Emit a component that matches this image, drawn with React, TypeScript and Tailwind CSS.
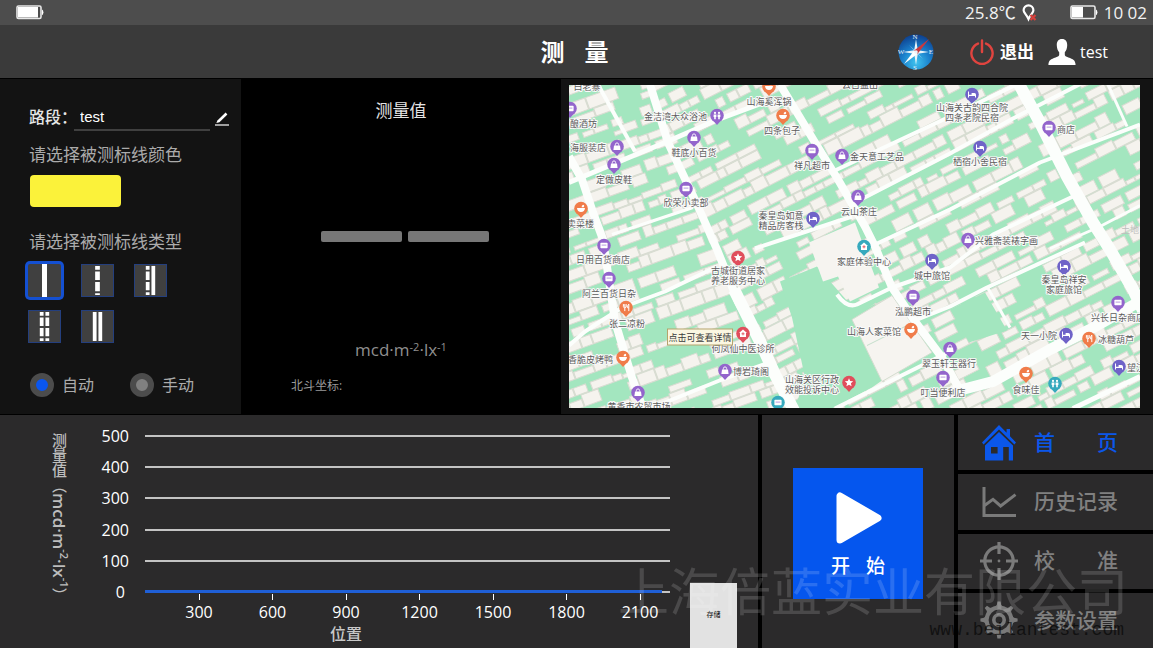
import { useState, type ReactNode } from "react"

type PinKind = "bag" | "card" | "bed" | "food" | "fork" | "star" | "med" | "people"

const PURPLE = "#9365cc"
const INDIGO = "#6f63c8"
const ORANGE = "#f07c4a"
const RED = "#e04e5c"
const TEAL = "#36a9bd"

const pins: { x: number; y: number; color: string; kind: PinKind }[] = [
  { x: 1, y: 24, color: PURPLE, kind: "card" },
  { x: 148, y: 31, color: PURPLE, kind: "people" },
  { x: 48, y: 62, color: PURPLE, kind: "bag" },
  { x: 45, y: 80, color: PURPLE, kind: "bag" },
  { x: 12, y: 124, color: ORANGE, kind: "food" },
  { x: 35, y: 161, color: PURPLE, kind: "card" },
  { x: 40, y: 194, color: PURPLE, kind: "card" },
  { x: 57, y: 223, color: ORANGE, kind: "fork" },
  { x: 54, y: 273, color: ORANGE, kind: "food" },
  { x: 69, y: 308, color: PURPLE, kind: "bag" },
  { x: 125, y: 53, color: PURPLE, kind: "bag" },
  { x: 117, y: 104, color: PURPLE, kind: "card" },
  { x: 169, y: 173, color: RED, kind: "star" },
  { x: 174, y: 249, color: RED, kind: "med" },
  { x: 156, y: 286, color: PURPLE, kind: "bag" },
  { x: 200, y: 2, color: ORANGE, kind: "food" },
  { x: 214, y: 31, color: ORANGE, kind: "food" },
  { x: 243, y: 66, color: PURPLE, kind: "card" },
  { x: 273, y: 71, color: PURPLE, kind: "bag" },
  { x: 289, y: 112, color: PURPLE, kind: "bag" },
  { x: 244, y: 134, color: INDIGO, kind: "bed" },
  { x: 295, y: 162, color: TEAL, kind: "med" },
  { x: 403, y: 10, color: INDIGO, kind: "bed" },
  { x: 480, y: 43, color: PURPLE, kind: "card" },
  { x: 411, y: 63, color: INDIGO, kind: "bed" },
  { x: 399, y: 155, color: PURPLE, kind: "bag" },
  { x: 363, y: 176, color: INDIGO, kind: "bed" },
  { x: 344, y: 212, color: PURPLE, kind: "card" },
  { x: 342, y: 245, color: ORANGE, kind: "food" },
  { x: 381, y: 264, color: PURPLE, kind: "bag" },
  { x: 374, y: 293, color: PURPLE, kind: "card" },
  { x: 280, y: 298, color: RED, kind: "star" },
  { x: 209, y: 318, color: TEAL, kind: "card" },
  { x: 495, y: 182, color: INDIGO, kind: "bed" },
  { x: 549, y: 218, color: PURPLE, kind: "card" },
  { x: 497, y: 250, color: INDIGO, kind: "bed" },
  { x: 520, y: 254, color: ORANGE, kind: "fork" },
  { x: 550, y: 282, color: INDIGO, kind: "bed" },
  { x: 457, y: 289, color: ORANGE, kind: "food" },
  { x: 486, y: 299, color: TEAL, kind: "people" },
]

// [text, x, baseline, anchor]
const labels: [string, number, number, "start" | "middle" | "end"][] = [
  ["白老寨", 18, 5, "middle"],
  ["酿酒坊", 28, 42, "end"],
  ["金洁湾大众浴池", 138, 35, "end"],
  ["海服装店", 37, 66, "end"],
  ["定做皮鞋", 45, 98, "middle"],
  ["卖菜楼", 25, 142, "end"],
  ["日用百货商店", 34, 178, "middle"],
  ["阿兰百货日杂", 40, 212, "middle"],
  ["张二凉粉", 58, 242, "middle"],
  ["香脆皮烤鸭", 44, 278, "end"],
  ["黄香市农贸市场", 70, 325, "middle"],
  ["鞋底小百货", 125, 71, "middle"],
  ["欣荣小卖部", 117, 121, "middle"],
  ["古城街道居家", 169, 189, "middle"],
  ["养老服务中心", 169, 199, "middle"],
  ["何凤仙中医诊所", 174, 267, "middle"],
  ["博岩琦阁", 164, 290, "start"],
  ["山海奚浑锅", 200, 20, "middle"],
  ["四条包子", 213, 49, "middle"],
  ["云古益出", 291, 3, "middle"],
  ["祥凡超市", 243, 84, "middle"],
  ["金天意工艺品", 281, 75, "start"],
  ["云山茶庄", 290, 130, "middle"],
  ["秦皇岛如意", 212, 134, "middle"],
  ["精品房客栈", 212, 144, "middle"],
  ["家庭体验中心", 295, 180, "middle"],
  ["山海关古韵四合院", 403, 26, "middle"],
  ["四条老院民宿", 403, 36, "middle"],
  ["商店", 488, 48, "start"],
  ["栖宿小舍民宿", 411, 80, "middle"],
  ["兴雅斋装裱字画", 406, 159, "start"],
  ["城中旅馆", 363, 194, "middle"],
  ["泓鹏超市", 344, 230, "middle"],
  ["山海人家菜馆", 332, 250, "end"],
  ["翠玉轩玉器行", 380, 282, "middle"],
  ["叮当便利店", 374, 311, "middle"],
  ["山海关区行政", 243, 298, "middle"],
  ["效能投诉中心", 243, 308, "middle"],
  ["秦皇岛祥安", 495, 198, "middle"],
  ["家庭旅馆", 495, 208, "middle"],
  ["兴长日杂商店", 549, 236, "middle"],
  ["天一小院", 488, 254, "end"],
  ["冰糖葫芦", 529, 258, "start"],
  ["望江", 558, 286, "start"],
  ["食味佳", 457, 308, "middle"],
]

const roads: [string, number][] = [
  ["M81 0 99 58 129 122 148 165 169 217 191 257", 8],
  ["M165 205 191 257 206 290 225 326", 12],
  ["M29 0 66 67", 4],
  ["M0 98 96 58 149 35 200 16", 5],
  ["M0 72 13 95 24 128 34 155 46 237 63 293 74 324", 8],
  ["M43 150 124 123", 3],
  ["M0 261 16 247 53 223 96 207 146 183", 4],
  ["M86 322 153 295 200 278", 4],
  ["M211 0 246 58 269 95 296 142 306 162 323 203 346 237 373 273 390 304", 8],
  ["M266 86 381 32 460 -6", 4],
  ["M286 118 381 69 444 34 520 -5", 4],
  ["M306 160 381 125 471 78 571 40", 4],
  ["M186 164 283 132", 4],
  ["M448 -4 471 38 498 92 524 138 541 165 564 205 574 226", 12],
  ["M539 0 558 42", 3],
  ["M481 164 531 142 571 121", 3],
  ["M268 210Q278 224 288 220L323 203 381 183 424 150 504 112", 4],
  ["M346 236 381 222 418 203 516 158", 4],
  ["M418 202 441 243", 3],
  ["M374 310 424 297 481 265 521 245 574 215", 11],
  ["M266 324 381 267", 4],
  ["M504 324 571 292", 5],
]

function seeded(seed: number) {
  let s = seed
  return () => {
    s = (s * 16807) % 2147483647
    return s / 2147483647
  }
}

// rows of house footprints, drawn in a frame that is rotated afterwards
function houses(seed: number) {
  const rnd = seeded(seed)
  let d = ""
  let y = -380
  let row = 0
  while (y < 620) {
    const h = 8 + Math.floor(rnd() * 5)
    let x = -250 + Math.floor(rnd() * 10)
    while (x < 800) {
      const w = 8 + Math.floor(rnd() * 16)
      const r = rnd()
      if (r > 0.16) {
        const inset = r > 0.85 ? 4 : r > 0.6 ? 2 : 0
        d += `M${x} ${y + inset}h${w}v${h - inset}h${-w}z`
      }
      x += w + (rnd() > 0.75 ? 5 : 1)
    }
    y += h + (row % 2 ? 5 + Math.floor(rnd() * 4) : 1)
    row++
  }
  return d
}

const westHouses = houses(41)
const eastHouses = houses(97)

function PinGlyph({ kind }: { kind: PinKind }) {
  switch (kind) {
    case "bag":
      return (
        <>
          <path d="M-3-1h6l.6 4.4h-7.2z" fill="#fff" />
          <path d="M-1.6-1v-1a1.6 1.6 0 0 1 3.2 0v1" fill="none" stroke="#fff" strokeWidth=".9" />
        </>
      )
    case "card":
      return (
        <>
          <rect x="-3.6" y="-2.8" width="7.2" height="5.6" rx=".8" fill="#fff" />
          <path d="M-2.4-.4h4.8" stroke="#b79adf" strokeWidth="1" />
        </>
      )
    case "bed":
      return <path d="M-4-3v6h1v-1.4h6V3h1V.2Q4-1.4 2.4-1.4H-.4V.2H-3V-3z" fill="#fff" />
    case "food":
      return <path d="M-4-.6h8Q3.6 3.4 0 3.4T-4-.6M.6-1.2Q.4-3.6 2.6-3.8 4-2.6 2.6-1.2z" fill="#fff" />
    case "fork":
      return <path d="M-2.6-3.4v2.6q0 1 1.4 1V3.6M-1.2-3.4v3M.2-3.4v3L-1.2.2M2.8 3.6v-7Q1.4-2.6 1.6.4h1.2" fill="none" stroke="#fff" strokeWidth="1" />
    case "star":
      return <path d="M0-4.2 1.2-1.4 4.2-1.2 1.9.8 2.6 3.8 0 2.2-2.6 3.8-1.9.8-4.2-1.2-1.2-1.4z" fill="#fff" />
    case "med":
      return (
        <>
          <path d="M0-4 4-.6H3v4h-6v-4h-1z" fill="#fff" />
          <path d="M0-1.2v3M-1.5.3h3" stroke="#e04e5c" strokeWidth=".9" />
        </>
      )
    case "people":
      return (
        <>
          <path d="M-3.4-1h2.8v2.4h-.6v2.4h-1.6V1.4h-.6zM.6-1h2.8v2.4h-.6v2.4H1.2V1.4H.6z" fill="#fff" />
          <circle cx="-2" cy="-2.6" r="1.1" fill="#fff" />
          <circle cx="2" cy="-2.6" r="1.1" fill="#fff" />
        </>
      )
  }
}

function CityMap() {
  return (
    <svg viewBox="0 0 571 324" preserveAspectRatio="xMidYMid slice" className="block h-full w-full" role="img" aria-label="地图">
      <defs>
        <clipPath id="west">
          <path d="M0 0H81L99 58 129 122 148 165 169 217 191 257 225 324H0z" />
        </clipPath>
        <clipPath id="east">
          <path d="M81 0H571V324H225L191 257 169 217 148 165 129 122 99 58z" />
        </clipPath>
      </defs>
      <rect width="571" height="324" fill="#a3e6bf" />
      <g fill="#f5f3ee" stroke="#d9dcd2" strokeWidth="1">
        <g clipPath="url(#west)">
          <path d={westHouses} transform="rotate(-20)" />
        </g>
        <g clipPath="url(#east)">
          <path d={eastHouses} transform="rotate(-27)" />
        </g>
      </g>
      <path d="M211 197 248 182 283 222 321 208 283 235 313 296 303 303 263 324H226L236 293 223 233z" fill="#a3e6bf" />
      <path d="M240 158 286 138 310 203 281 217 269 192 254 197z" fill="#f6f4f0" />
      <path d="M283 235 323 211 363 268 313 297z" fill="#f6f4f0" stroke="#d5ddd0" />
      <path d="M298 261 340 240" stroke="#c5dfcc" />
      <path d="M381 225 416 208 438 246 400 258z" fill="#a3e6bf" />
      {roads.map(([d, width]) => (
        <path key={d} d={d} fill="none" stroke="#fcfefc" strokeWidth={width} strokeLinejoin="round" />
      ))}
      {pins.map((pin) => (
        <g key={`${pin.x}-${pin.y}`} transform={`translate(${pin.x} ${pin.y})`}>
          <path d="M-3.6 5.4 0 9.4 3.6 5.4z" fill={pin.color} />
          <circle r="6.8" fill={pin.color} />
          <PinGlyph kind={pin.kind} />
        </g>
      ))}
      <g fontSize="9" fill="#5c5c5c" stroke="#fafafa" strokeWidth="2" strokeLinejoin="round" style={{ paintOrder: "stroke" }}>
        {labels.map(([text, x, y, anchor]) => (
          <text key={text} x={x} y={y} textAnchor={anchor}>
            {text}
          </text>
        ))}
      </g>
      <text x="552" y="148" fontSize="9" fill="#bdbdbd">
        土地
      </text>
      <rect x="98.5" y="244.5" width="65" height="16" fill="#fbf7e2" stroke="#b5a36c" />
      <text x="131" y="256" fontSize="9" fill="#3c3c3c" textAnchor="middle">
        点击可查看详情
      </text>
    </svg>
  )
}

function Battery({ level }: { level: number }) {
  return (
    <svg viewBox="0 0 28 15" className="h-[15px] w-7" aria-hidden="true">
      <rect x="1" y="1" width="24" height="12.5" rx="1.5" fill="none" stroke="#e8e8e8" strokeWidth="1.6" />
      <rect x="2" y="2" width={level} height="10.5" fill="#fff" />
      <path d="M26 4.4q1.4.6 1.4 2.9T26 10.2z" fill="#fff" />
    </svg>
  )
}

function Compass() {
  return (
    <svg viewBox="0 0 36 38" className="h-[38px] w-9" aria-hidden="true">
      <defs>
        <radialGradient id="sea" cx="50%" cy="80%" r="80%">
          <stop offset="0" stopColor="#3fc3ee" />
          <stop offset=".5" stopColor="#1a80cc" />
          <stop offset="1" stopColor="#0d3f8e" />
        </radialGradient>
      </defs>
      <circle cx="18" cy="19" r="17.5" fill="url(#sea)" />
      <g fill="#e9f4fa">
        <path d="M18 6 19.8 17.2 31 19 19.8 20.8 18 32 16.2 20.8 5 19 16.2 17.2z" />
        <path d="M11 12 17 17.4 25 26 19 20.6z" opacity=".8" />
        <path d="M19.6 20.8 6 31 16.2 17.4z" fill="#fff" />
      </g>
      <path d="M31 6 19.6 20.8 16.2 17.4z" fill="#c9383e" />
      <circle cx="18" cy="19" r="1.8" fill="#e9f4fa" />
      <g fontSize="7" fill="#e9f4fa" textAnchor="middle" fontFamily="Liberation Serif, serif">
        <text x="17" y="6">N</text>
        <text x="17" y="37">S</text>
        <text x="3" y="21">W</text>
        <text x="33" y="21">E</text>
      </g>
    </svg>
  )
}

function HomeIcon() {
  return (
    <svg viewBox="0 0 36 36" className="h-9 w-9" fill="#0b57ea" aria-hidden="true">
      <path d="M18 0 1 17.4 2.6 19.6 18 4.6 33.4 19.6 35 17.4 29 11.2V4H25.6v3.8z" />
      <path fillRule="evenodd" d="M18 7 4 20.4V35.6H22.2V22h5.6v13.6H32V20.4zM10 22h6.6v6.6H10z" />
    </svg>
  )
}

function HistoryIcon() {
  return (
    <svg viewBox="0 0 36 36" className="h-9 w-9" fill="none" stroke="#7a7a7a" strokeWidth="3" aria-hidden="true">
      <path d="M3 3V31.5H35" />
      <path d="M3.5 21.5 12 15.4 19.6 22 34.5 10.6" />
    </svg>
  )
}

function AimIcon() {
  return (
    <svg viewBox="0 0 38 38" className="h-[38px] w-[38px]" fill="none" stroke="#7a7a7a" strokeWidth="3.2" aria-hidden="true">
      <circle cx="19" cy="19" r="14.2" />
      <path d="M19 0V12M19 26V38M0 19H12M26 19H38" />
      <circle cx="19" cy="19" r="1.4" fill="#7a7a7a" stroke="none" />
    </svg>
  )
}

function GearIcon() {
  const teeth = [0, 45, 90, 135, 180, 225, 270, 315]
  return (
    <svg viewBox="0 0 38 38" className="h-[38px] w-[38px]" aria-hidden="true">
      {teeth.map((deg) => (
        <path key={deg} d="M13.6 7.4 16.8 4 17.4.4H20.6L21.2 4 24.4 7.4z" fill="#7a7a7a" transform={`rotate(${deg} 19 19)`} />
      ))}
      <circle cx="19" cy="19" r="12.4" fill="none" stroke="#7a7a7a" strokeWidth="4" />
      <circle cx="19" cy="19" r="5.2" fill="none" stroke="#7a7a7a" strokeWidth="3.6" />
    </svg>
  )
}

const lineTypes: { name: string; strips: ReactNode }[] = [
  { name: "单实线", strips: <path d="M16.5 0V33" strokeWidth="5" /> },
  { name: "单虚线", strips: <path d="M16.5 1V5M16.5 7V16M16.5 18V28M16.5 30V32" strokeWidth="5" /> },
  {
    name: "虚实线",
    strips: (
      <>
        <path d="M13.5 1V5M13.5 7V16M13.5 18V27M13.5 29V32" strokeWidth="4" />
        <path d="M19.5 1V32" strokeWidth="4" />
      </>
    ),
  },
  {
    name: "双虚线",
    strips: (
      <path d="M13.5 1V5M13.5 7V16M13.5 18V27M13.5 29V32M19.5 1V5M19.5 7V16M19.5 18V27M19.5 29V32" strokeWidth="4" />
    ),
  },
  { name: "双实线", strips: <path d="M13.5 1V32M19.5 1V32" strokeWidth="4" /> },
]

function SettingsPanel() {
  const [lineType, setLineType] = useState(0)
  return (
    <section className="w-[241px] shrink-0 bg-[#131313] pl-7 text-[#ababab]">
      <div className="flex items-center pt-6">
        <label htmlFor="segment" className="w-[46px] whitespace-nowrap pl-px text-base font-medium text-[#e6e6e6]">
          路段：
        </label>
        <input
          id="segment"
          defaultValue="test"
          className="h-7 w-[136px] border-b-2 border-[#404040] bg-transparent px-1.5 font-['Liberation_Sans_Narrow','Liberation_Sans',sans-serif] text-[15px] text-white outline-none"
        />
        <button type="button" aria-label="编辑" className="ml-[5px] mt-1">
          <svg viewBox="0 0 14 14" className="h-3.5 w-3.5" aria-hidden="true">
            <path d="M1.4 11 2.4 8.4 10.6.6 12.4 2.4 4.4 10.2z" fill="#fff" />
            <path d="M0 13H14" stroke="#ddd" strokeWidth="1.4" />
          </svg>
        </button>
      </div>
      <h2 className="mt-3 pl-px text-[17px] leading-6">请选择被测标线颜色</h2>
      <button type="button" aria-label="黄色" className="ml-0.5 mt-2 block h-8 w-[91px] rounded-sm bg-[#fbf23a]" />
      <h2 className="mt-[23px] pl-px text-[17px] leading-6">请选择被测标线类型</h2>
      <div className="mt-2.5 flex w-[170px] flex-wrap gap-x-5 gap-y-[13px]">
        {lineTypes.map((type, i) => (
          <button
            key={type.name}
            type="button"
            aria-label={type.name}
            aria-pressed={lineType === i}
            onClick={() => setLineType(i)}
            className={
              lineType === i
                ? "h-[33px] w-[33px] rounded-xs bg-[#404040] ring-3 ring-[#1450d2]"
                : "h-[33px] w-[33px] border border-[#243f7e] bg-[#404040]"
            }
          >
            <svg viewBox="0 0 33 33" className="h-full w-full" stroke="#fff" aria-hidden="true">
              {type.strips}
            </svg>
          </button>
        ))}
      </div>
      <div className="mt-[30px] flex gap-9 pl-0.5 text-base">
        <label className="flex items-center gap-2">
          <input
            type="radio"
            name="mode"
            defaultChecked
            className="h-6 w-6 appearance-none rounded-full border-6 border-[#4c4c4c] bg-[#808080] checked:bg-[#0a56f0]"
          />
          自动
        </label>
        <label className="flex items-center gap-2">
          <input
            type="radio"
            name="mode"
            className="h-6 w-6 appearance-none rounded-full border-6 border-[#4c4c4c] bg-[#808080] checked:bg-[#0a56f0]"
          />
          手动
        </label>
      </div>
    </section>
  )
}

function Reading() {
  return (
    <section className="flex w-80 shrink-0 flex-col bg-black">
      <h2 className="pt-5 text-center text-[17px] leading-6 text-[#e4e4e4]">测量值</h2>
      <div className="mt-[108px] flex justify-center gap-1.5 pl-2">
        <div className="h-[11px] w-[81px] rounded-xs bg-[#777]" />
        <div className="h-[11px] w-[81px] rounded-xs bg-[#777]" />
      </div>
      <p className="mt-24 text-center text-[17px] font-medium leading-6 text-[#8f8f8f]">
        mcd·m<sup className="text-[11px]">-2</sup>·lx<sup className="text-[11px]">-1</sup>
      </p>
      <p className="mt-4 pl-[50px] text-xs text-[#9a9a9a]">北斗坐标:</p>
    </section>
  )
}

function Chart() {
  const levels = [500, 400, 300, 200, 100]
  const positions = [300, 600, 900, 1200, 1500, 1800, 2100]
  return (
    <section className="flex flex-1 bg-[#2b2a2b] text-white">
      <p className="ml-[47px] mt-[18px] h-[190px] w-6 whitespace-nowrap text-[15px] font-medium leading-6 text-[#bdbdbd] [writing-mode:vertical-rl]">
        测量值（
        <span className="text-[17px] font-semibold">
          mcd·m<sup className="static align-[5px] text-[11px]">-2</sup>·lx<sup className="static align-[5px] text-[11px]">-1</sup>
        </span>
        ）
      </p>
      <div className="ml-[30px] flex-1 pt-[11px]">
        <div className="flex h-[176px] flex-col justify-between text-base leading-5">
          {levels.map((level) => (
            <div key={level} className="flex items-center gap-4">
              <span className="w-7 text-right">{level}</span>
              <div className="h-0.5 flex-1 bg-[#c4c4c4]" />
            </div>
          ))}
          <div className="flex items-center gap-4">
            <span className="w-7 pr-1 text-right">0</span>
            <div className="flex flex-1 items-center">
              <div className="h-[3px] flex-1 bg-[#1f5fd6]" />
              <div className="h-0.5 w-2 bg-[#c4c4c4]" />
            </div>
          </div>
        </div>
        <div className="-mt-2 flex justify-between pl-[78px] pr-2.5 text-base leading-6">
          {positions.map((position) => (
            <div key={position} className="flex w-10 flex-col items-center">
              <div className="h-1.5 w-px bg-white" />
              <span>{position}</span>
            </div>
          ))}
        </div>
        <p className="-mt-0.5 ml-[229px] text-base font-medium leading-6 text-[#c8c8c8]">位置</p>
      </div>
      <button type="button" className="ml-5 mr-[21px] h-[65px] w-[47px] self-end bg-[#e2e2e2] text-[7px] text-black">
        存储
      </button>
    </section>
  )
}

const menu = [
  { label: "首　　页", icon: <HomeIcon />, active: true },
  { label: "历史记录", icon: <HistoryIcon />, active: false },
  { label: "校　　准", icon: <AimIcon />, active: false },
  { label: "参数设置", icon: <GearIcon />, active: false },
]

export default function App() {
  return (
    <div className="relative flex min-h-screen flex-col overflow-hidden bg-black font-['Open_Sans','Noto_Sans_CJK_SC',sans-serif]">
      <div className="flex h-[25px] items-center bg-[#4d4d4d] pl-4 pr-1.5 text-[17px] text-[#f2f2f2]">
        <Battery level={20} />
        <span className="ml-auto">25.8℃</span>
        <svg viewBox="0 0 16 18" className="ml-1.5 h-[18px] w-4" aria-hidden="true">
          <path d="M6.5 1.4a4.900 4.900 0 0 1 4.900 4.900c0 2.400-2.900 4.200-4.900 8.700-2-4.500-4.900-6.300-4.900-8.700a4.900 4.900 0 0 1 4.900-4.900z" fill="none" stroke="#fff" strokeWidth="2.2" />
          <path d="M8.5 11 13.5 16M13.5 11 8.5 16" stroke="#d8403c" strokeWidth="2.2" />
        </svg>
        <span className="ml-8">
          <Battery level={11} />
        </span>
        <time className="ml-1.5">10 02</time>
      </div>

      <header className="grid h-[53px] grid-cols-3 items-center bg-[#3a3a3a] text-white">
        <span />
        <h1 className="flex justify-center gap-5 pr-1 text-2xl font-bold">
          <span>测</span>
          <span>量</span>
        </h1>
        <div className="flex items-center justify-end pr-[45px]">
          <button type="button" aria-label="指南针">
            <Compass />
          </button>
          <button type="button" className="ml-9 flex items-center gap-1.5 text-[17px] font-bold">
            <svg viewBox="0 0 24 26" className="h-[26px] w-6" fill="none" stroke="#e0443f" strokeWidth="2.4" strokeLinecap="round" aria-hidden="true">
              <path d="M8 4.6A10.6 10.6 0 1 0 16 4.6M12 1.4V13" />
            </svg>
            退出
          </button>
          <button type="button" className="ml-3.5 flex items-center gap-1 text-base">
            <svg viewBox="0 0 28 26" className="h-[26px] w-7" fill="#fff" aria-hidden="true">
              <path d="M14 0c3.6 0 5.4 2.6 5.2 6.4-.1 3-1 5.2-2.4 6.8v2.6c0 1.2 1 1.6 3.6 2.6C25 20 27.4 20.8 27.6 26H.4C.6 20.8 3 20 7.600 18.400c2.600-1 3.600-1.400 3.600-2.600v-2.600C9.800 11.600 8.900 9.400 8.800 6.400 8.600 2.600 10.400 0 14 0z" />
            </svg>
            test
          </button>
        </div>
      </header>

      <main className="mt-px flex h-[335px]">
        <SettingsPanel />
        <Reading />
        <section className="flex-1 bg-[#131313] pb-1.5 pl-2 pr-[13px] pt-1.5">
          <CityMap />
        </section>
      </main>

      <div className="flex min-h-[233px] flex-1 gap-1 pt-px">
        <Chart />
        <section className="flex w-48 shrink-0 items-start justify-center bg-[#2b2a2b] pt-[53px]">
          <button type="button" className="flex h-[131px] w-[130px] flex-col items-center bg-[#0556ee] pt-6 text-[19px] font-medium text-white">
            <svg viewBox="0 0 46 52" className="ml-0.5 h-[52px] w-[46px]" aria-hidden="true">
              <path d="M4 4V48L42 26z" fill="#fff" stroke="#fff" strokeWidth="7" strokeLinejoin="round" />
            </svg>
            <span className="mt-2 flex gap-4">
              <span>开</span>
              <span>始</span>
            </span>
          </button>
        </section>
        <nav className="grid w-[195px] shrink-0 grid-rows-4 gap-1">
          {menu.map((item) => (
            <a
              key={item.label}
              href="#"
              className={
                item.active
                  ? "flex items-center bg-[#2b2a2b] pl-[22px] text-[21px] font-medium text-[#0b57ea]"
                  : "flex items-center bg-[#2b2a2b] pl-[22px] text-[21px] font-medium text-[#808080]"
              }
            >
              <span className="flex w-[38px] justify-center">{item.icon}</span>
              <span className="ml-4 whitespace-nowrap">{item.label}</span>
            </a>
          ))}
        </nav>
      </div>

      <div className="pointer-events-none absolute bottom-2 right-[25px] flex flex-col items-end">
        <span className="text-[51px] leading-[58px] text-white/15">上海倍蓝实业有限公司</span>
        <span className="mr-1 font-['Liberation_Mono',monospace] text-lg leading-5 text-black/60">www.beilantest.com</span>
      </div>
    </div>
  )
}
